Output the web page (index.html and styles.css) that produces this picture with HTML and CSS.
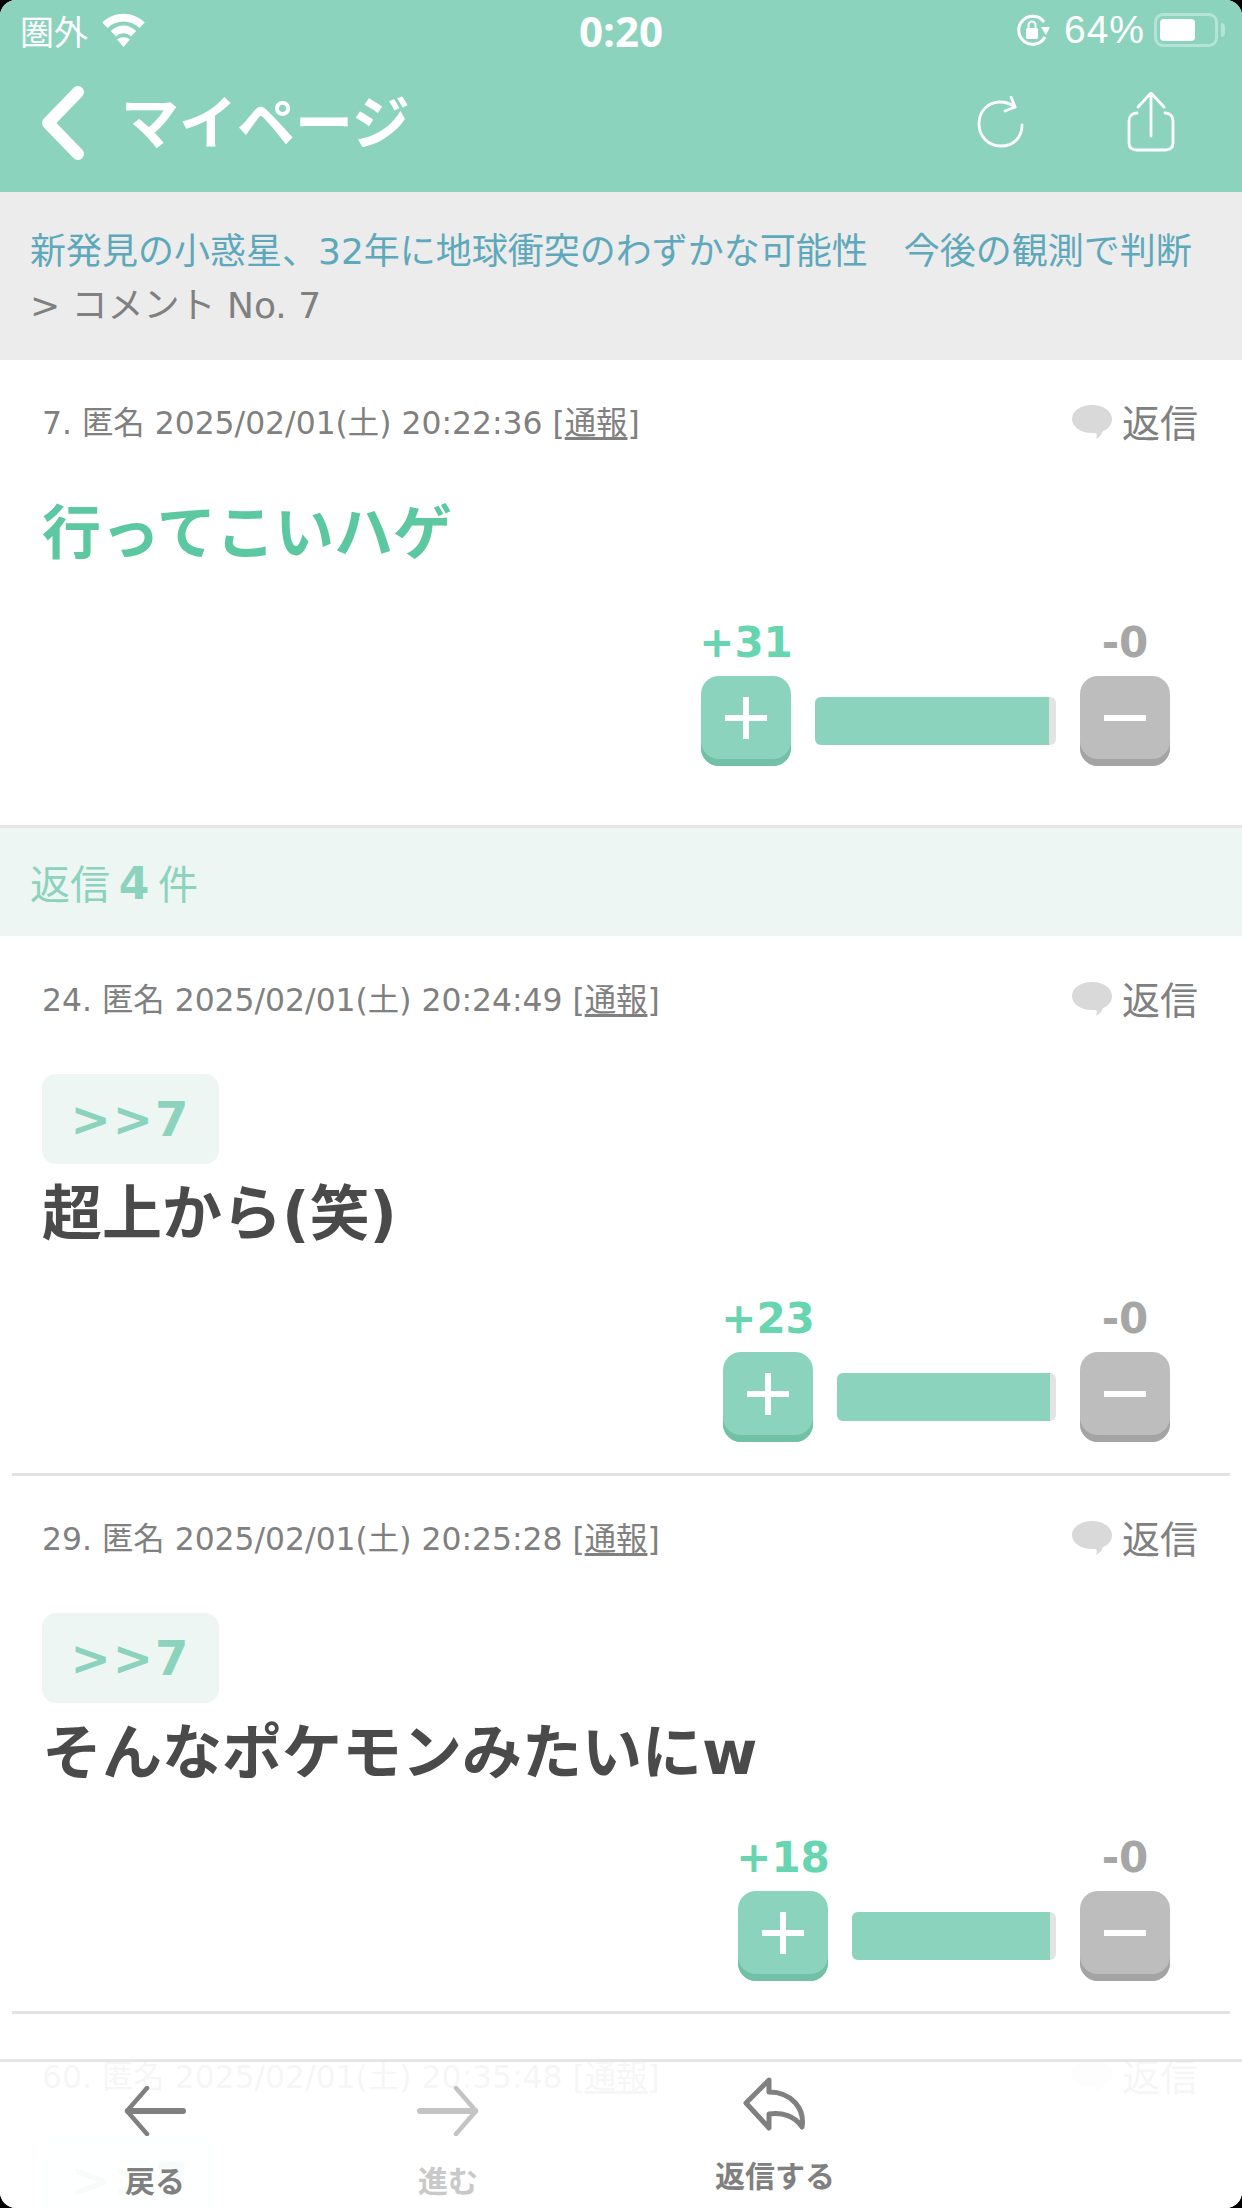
FILE: index.html
```html
<!DOCTYPE html>
<html lang="ja">
<head>
<meta charset="UTF-8">
<meta name="viewport" content="width=device-width, initial-scale=1.0">
<title>コメント No. 7</title>
<link rel="stylesheet" href="styles.css">
</head>
<body>

<div class="screen">
    <header class="header">
        <div class="statusbar">
            <div class="status-left">
                <span>圏外</span>
                <svg class="wifi" width="45" height="34" viewBox="3 3 40 32">
                    <path d="M3 12 C14 1 32 1 43 12 L38 17 C29 9 17 9 8 17 Z" fill="#fff"/>
                    <path d="M11 20 C18 13 28 13 35 20 L30 25 C26 21 20 21 16 25 Z" fill="#fff"/>
                    <path d="M17 28 C20 25 26 25 29 28 L23 35 Z" fill="#fff"/>
                </svg>
            </div>
            <div class="status-time">0:20</div>
            <div class="status-right">
                <svg width="36" height="36" viewBox="0 0 36 36">
                    <path d="M29 10 A14 14 0 1 0 30 25" fill="none" stroke="#fff" stroke-width="3"/>
                    <path d="M26 15 L35 15 L31 23 Z" fill="#fff"/>
                    <rect x="11" y="16" width="12" height="11" rx="1.5" fill="#fff"/>
                    <path d="M13.5 16 V13 A3.5 3.5 0 0 1 20.5 13 V16" fill="none" stroke="#fff" stroke-width="2"/>
                </svg>
                <span class="battery-pct">64%</span>
                <div class="battery"><div class="battery-level"></div></div>
                <div class="battery-tip"></div>
            </div>
        </div>
        <nav class="navbar">
            <svg class="back" width="50" height="78" viewBox="0 0 50 78">
                <path d="M38 9 L8 40 L38 71" fill="none" stroke="#fff" stroke-width="12" stroke-linecap="round" stroke-linejoin="round"/>
            </svg>
            <span class="nav-title">マイページ</span>
            <div class="nav-icons">
                <svg width="48" height="52" viewBox="0 0 48 52">
                    <path d="M45 29 C45 42 36 50 24 50 C11 50 2 40 2 28 C2 15 11 6 23 6 C29 6 34 8 38 11" fill="none" stroke="#fff" stroke-width="2.8" stroke-linecap="round"/>
                    <path d="M34 1 L38 11 L28 15" fill="none" stroke="#fff" stroke-width="2.8" stroke-linecap="round" stroke-linejoin="round"/>
                </svg>
                <svg width="48" height="60" viewBox="0 0 48 60">
                    <path d="M10 21 C5 21 2 24 2 29 V51 C2 56 5 58 10 58 H38 C43 58 46 56 46 51 V29 C46 24 43 21 38 21" fill="none" stroke="#fff" stroke-width="2.8" stroke-linecap="round"/>
                    <path d="M24 44 V2 M11 15 L24 1 L37 15" fill="none" stroke="#fff" stroke-width="2.8" stroke-linecap="round" stroke-linejoin="round"/>
                </svg>
            </div>
        </nav>
    </header>

    <div class="breadcrumb">
        <div class="crumb-link">新発見の小惑星、32年に地球衝突のわずかな可能性　今後の観測で判断</div>
        <div class="crumb-current">&gt; コメント No. 7</div>
    </div>

    <section class="comment main">
        <div class="meta">
            <span class="info">7. 匿名 2025/02/01(土) 20:22:36 [<u>通報</u>]</span>
            <span class="reply">
                <svg width="42" height="36" viewBox="0 0 42 36"><path d="M21 1 C32 1 41 7 41 15 C41 21 37 25 32 27 C31 30 29 33 25 35 C26 32 26 30 25 29 C24 29 22 29 21 29 C10 29 1 23 1 15 C1 7 10 1 21 1 Z" fill="#d9d9d9"/></svg>
                返信
            </span>
        </div>
        <div class="body highlight">行ってこいハゲ</div>
        <div class="votes">
            <span class="plus-count">+31</span>
            <span class="minus-count">-0</span>
            <div class="btn plus"><span class="h"></span><span class="v"></span></div>
            <div class="bar" style="width:241px"><div class="fill" style="width:234px"></div></div>
            <div class="btn minus"><span class="h"></span></div>
        </div>
    </section>

    <div class="reply-band">返信 <b>4</b> 件</div>

    <section class="comment first">
        <div class="meta">
            <span class="info">24. 匿名 2025/02/01(土) 20:24:49 [<u>通報</u>]</span>
            <span class="reply">
                <svg width="42" height="36" viewBox="0 0 42 36"><path d="M21 1 C32 1 41 7 41 15 C41 21 37 25 32 27 C31 30 29 33 25 35 C26 32 26 30 25 29 C24 29 22 29 21 29 C10 29 1 23 1 15 C1 7 10 1 21 1 Z" fill="#d9d9d9"/></svg>
                返信
            </span>
        </div>
        <div class="quote">&gt;&gt;7</div>
        <div class="body">超上から(笑)</div>
        <div class="votes">
            <span class="plus-count">+23</span>
            <span class="minus-count">-0</span>
            <div class="btn plus"><span class="h"></span><span class="v"></span></div>
            <div class="bar" style="width:219px"><div class="fill" style="width:213px"></div></div>
            <div class="btn minus"><span class="h"></span></div>
        </div>
    </section>

    <section class="comment">
        <div class="meta">
            <span class="info">29. 匿名 2025/02/01(土) 20:25:28 [<u>通報</u>]</span>
            <span class="reply">
                <svg width="42" height="36" viewBox="0 0 42 36"><path d="M21 1 C32 1 41 7 41 15 C41 21 37 25 32 27 C31 30 29 33 25 35 C26 32 26 30 25 29 C24 29 22 29 21 29 C10 29 1 23 1 15 C1 7 10 1 21 1 Z" fill="#d9d9d9"/></svg>
                返信
            </span>
        </div>
        <div class="quote">&gt;&gt;7</div>
        <div class="body">そんなポケモンみたいにw</div>
        <div class="votes">
            <span class="plus-count">+18</span>
            <span class="minus-count">-0</span>
            <div class="btn plus"><span class="h"></span><span class="v"></span></div>
            <div class="bar" style="width:204px"><div class="fill" style="width:198px"></div></div>
            <div class="btn minus"><span class="h"></span></div>
        </div>
    </section>

    <section class="comment">
        <div class="meta">
            <span class="info">60. 匿名 2025/02/01(土) 20:35:48 [<u>通報</u>]</span>
            <span class="reply">
                <svg width="42" height="36" viewBox="0 0 42 36"><path d="M21 1 C32 1 41 7 41 15 C41 21 37 25 32 27 C31 30 29 33 25 35 C26 32 26 30 25 29 C24 29 22 29 21 29 C10 29 1 23 1 15 C1 7 10 1 21 1 Z" fill="#d9d9d9"/></svg>
                返信
            </span>
        </div>
        <div class="quote peek">&gt;&gt;7</div>
    </section>

    <footer class="toolbar">
        <div class="tool">
            <svg width="62" height="50" viewBox="0 0 62 50">
                <path d="M59 25 H4" fill="none" stroke="#808080" stroke-width="6" stroke-linecap="round"/>
                <path d="M23 2 L3 25 L23 48" fill="none" stroke="#808080" stroke-width="4.5" stroke-linecap="round" stroke-linejoin="round"/>
            </svg>
            <span>戻る</span>
        </div>
        <div class="tool disabled">
            <svg width="62" height="50" viewBox="0 0 62 50">
                <path d="M3 25 H58" fill="none" stroke="#c4c4c4" stroke-width="6" stroke-linecap="round"/>
                <path d="M39 2 L59 25 L39 48" fill="none" stroke="#c4c4c4" stroke-width="4.5" stroke-linecap="round" stroke-linejoin="round"/>
            </svg>
            <span>進む</span>
        </div>
        <div class="tool reply-tool">
            <svg width="66" height="54" viewBox="0 0 66 54">
                <path d="M27 3 L4 26 L27 51 L27 37 C40 35 53 39 60 50 C63 32 50 15 27 15 Z" fill="none" stroke="#808080" stroke-width="5" stroke-linejoin="round"/>
            </svg>
            <span>返信する</span>
        </div>
    </footer>
</div>

</body>
</html>
```

FILE: styles.css
```css
* {
    box-sizing: border-box;
}
html, body {
    margin: 0;
    padding: 0;
    background-color: #000;
}
body {
    font-family: "DejaVu Sans", "Noto Sans CJK JP", sans-serif;
    color: #808080;
}
.screen {
    position: relative;
    width: 1242px;
    height: 2208px;
    overflow: hidden;
    background-color: #fff;
    border-radius: 16px;
}
.header {
    height: 192px;
    background-color: #8cd3bd;
    color: #fff;
}
.statusbar {
    position: relative;
    display: flex;
    justify-content: space-between;
    align-items: center;
    height: 60px;
    padding: 0 17px 0 20px;
}
.status-left {
    display: flex;
    align-items: center;
    gap: 13px;
    font-size: 34px;
    font-family: "Noto Sans CJK JP", sans-serif;
}
.status-time {
    position: absolute;
    left: 0;
    right: 0;
    text-align: center;
    font-family: "Open Sans", sans-serif;
    font-size: 42px;
    font-weight: 700;
}
.status-right {
    display: flex;
    align-items: center;
}
.battery-pct {
    margin-left: 13px;
    margin-right: 9px;
    font-family: "Liberation Sans", sans-serif;
    font-size: 39px;
    letter-spacing: 1px;
}
.battery {
    width: 64px;
    height: 34px;
    padding: 3px;
    border: 3px solid #b5e3d5;
    border-radius: 9px;
}
.battery-level {
    width: 35px;
    height: 100%;
    background-color: #fff;
    border-radius: 4px;
}
.battery-tip {
    width: 4px;
    height: 14px;
    margin-left: 3px;
    background-color: #b5e3d5;
    border-radius: 0 4px 4px 0;
}
.navbar {
    display: flex;
    align-items: center;
    height: 132px;
    padding: 0 67px 8px 40px;
}
.nav-title {
    margin-left: 31px;
    margin-bottom: 6px;
    font-family: "Noto Sans CJK JP", sans-serif;
    font-size: 58px;
    font-weight: 700;
    line-height: 1;
}
.nav-icons {
    display: flex;
    align-items: center;
    gap: 102px;
    margin-left: auto;
}
.breadcrumb {
    height: 168px;
    padding: 33px 30px 0;
    background-color: #ececec;
    font-size: 36px;
    line-height: 54px;
    white-space: nowrap;
}
.crumb-link {
    color: #5ea8bb;
}
.comment {
    position: relative;
    padding: 42px 42px 0;
}
.comment.main {
    height: 468px;
    padding-top: 41px;
    border-bottom: 3px solid #e6e6e6;
}
.comment.first {
    height: 537px;
}
.comment + .comment {
    height: 538px;
    padding-top: 44px;
}
.comment + .comment::before {
    content: "";
    position: absolute;
    left: 12px;
    right: 12px;
    top: 0;
    height: 3px;
    background-color: #e3e3e3;
}
.meta {
    display: flex;
    justify-content: space-between;
    align-items: center;
    height: 44px;
    margin-right: 2px;
    font-size: 31.4px;
    white-space: nowrap;
}
.meta u {
    text-underline-offset: 3px;
}
.info {
    margin-bottom: 5px;
}
.reply {
    display: flex;
    align-items: center;
    gap: 9px;
    padding-bottom: 5px;
    font-family: "Noto Sans CJK JP", sans-serif;
    font-size: 38px;
}
.reply svg {
    margin-top: 3px;
}
.body {
    font-size: 60px;
    font-weight: 700;
    line-height: 72px;
    color: #4a4a4a;
    white-space: nowrap;
}
.highlight {
    margin-top: 53px;
    font-size: 59px;
    color: #5cc8a1;
}
.quote {
    width: 177px;
    height: 90px;
    margin-top: 52px;
    background-color: #edf6f3;
    border-radius: 14px;
    text-align: center;
    font-size: 48px;
    font-weight: 700;
    line-height: 90px;
    letter-spacing: 2px;
    color: #8cd3bd;
}
.quote.peek {
    margin-top: 36px;
}
.quote + .body {
    margin-top: 14px;
}
.votes {
    display: grid;
    grid-template-columns: 90px auto 90px;
    grid-template-rows: 66px 90px;
    justify-content: end;
    align-items: center;
    column-gap: 24px;
    margin-top: 36px;
    margin-right: 30px;
}
.main .votes {
    margin-top: 40px;
}
.plus-count, .minus-count {
    justify-self: center;
    margin-bottom: 2px;
    font-size: 42px;
    font-weight: 700;
    white-space: nowrap;
}
.plus-count {
    grid-column: 1;
    color: #66d5b0;
}
.minus-count {
    grid-column: 3;
    color: #a6a6a6;
}
.btn {
    position: relative;
    width: 90px;
    height: 90px;
    border-radius: 18px;
}
.btn .h, .btn .v {
    position: absolute;
    background-color: #fff;
}
.btn .h {
    left: 24px;
    top: 39px;
    width: 42px;
    height: 6px;
}
.btn .v {
    left: 42px;
    top: 21px;
    width: 6px;
    height: 42px;
}
.plus {
    background-color: #8cd3bd;
    box-shadow: inset 0 -7px 0 #72c0a6;
}
.minus {
    background-color: #bdbdbd;
    box-shadow: inset 0 -7px 0 #a4a4a4;
}
.bar {
    height: 48px;
    background-color: #e3e3e3;
    border-radius: 6px;
    overflow: hidden;
}
.fill {
    height: 100%;
    background-color: #8cd3bd;
}
.reply-band {
    height: 108px;
    padding: 2px 0 0 30px;
    background-color: #edf6f3;
    font-size: 40px;
    line-height: 108px;
    word-spacing: -4px;
    color: #8cd3bd;
}
.reply-band b {
    font-size: 44px;
}
.toolbar {
    position: absolute;
    left: 0;
    right: 0;
    bottom: 0;
    height: 149px;
    display: grid;
    grid-template-columns: 310px 276px 378px;
    background-color: rgba(255, 255, 255, 0.93);
    border-top: 3px solid rgba(220, 220, 220, 0.7);
}
.tool {
    display: flex;
    flex-direction: column;
    align-items: center;
    padding-top: 24px;
    font-family: "Noto Sans CJK JP", sans-serif;
    font-size: 30px;
    font-weight: 700;
    color: #808080;
}
.tool span {
    margin-top: 23px;
    line-height: 40px;
}
.tool.disabled {
    color: #c9c9c9;
}
.reply-tool {
    padding-top: 15px;
}
```
